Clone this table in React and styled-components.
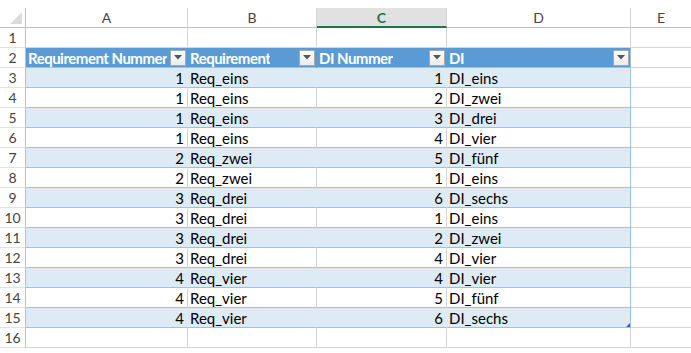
import React from 'react';
import styled, { createGlobalStyle } from 'styled-components';

const GlobalStyle = createGlobalStyle`
  html, body {
    margin: 0;
    padding: 0;
    background: #ffffff;
  }
  body {
    font-family: Lato, "Liberation Sans", sans-serif;
  }
`;

const columns = ['A', 'B', 'C', 'D', 'E'];

const headers = ['Requirement Nummer', 'Requirement', 'DI Nummer', 'DI'];

const data = [
  [1, 'Req_eins', 1, 'DI_eins'],
  [1, 'Req_eins', 2, 'DI_zwei'],
  [1, 'Req_eins', 3, 'DI_drei'],
  [1, 'Req_eins', 4, 'DI_vier'],
  [2, 'Req_zwei', 5, 'DI_fünf'],
  [2, 'Req_zwei', 1, 'DI_eins'],
  [3, 'Req_drei', 6, 'DI_sechs'],
  [3, 'Req_drei', 1, 'DI_eins'],
  [3, 'Req_drei', 2, 'DI_zwei'],
  [3, 'Req_drei', 4, 'DI_vier'],
  [4, 'Req_vier', 4, 'DI_vier'],
  [4, 'Req_vier', 5, 'DI_fünf'],
  [4, 'Req_vier', 6, 'DI_sechs'],
];

const GRID = '#d4d4d4';
const TABLE_LINE = '#9bc2e6';
const HEAD_BLUE = '#5b9bd5';
const BAND = '#ddebf7';

function FilterButton() {
  return (
    <FilterBox>
      <svg width="8" height="5" viewBox="0 0 8 5">
        <path d="M0 0 H8 L4 4.5 Z" fill="#555" />
      </svg>
    </FilterBox>
  );
}

export default function App() {
  const lastRow = data.length - 1;
  return (
    <>
      <GlobalStyle />
      <Sheet>
        <Corner>
          <svg width="12" height="12" viewBox="0 0 12 12">
            <path d="M12 0 V12 H0 Z" fill="#dcdcdc" />
          </svg>
        </Corner>
        {columns.map((c) => (
          <ColHead key={c} $selected={c === 'C'}>
            {c}
          </ColHead>
        ))}

        <RowHead>1</RowHead>
        {columns.map((c) => (
          <Cell key={c} />
        ))}

        <RowHead>2</RowHead>
        {headers.map((h, i) => (
          <HeadCell key={h} $last={i === 3}>
            <HeadLabel>{h}</HeadLabel>
            <FilterButton />
          </HeadCell>
        ))}
        <Cell />

        {data.map((row, r) => {
          const band = r % 2 === 0;
          return (
            <React.Fragment key={r}>
              <RowHead>{r + 3}</RowHead>
              {row.map((v, i) => (
                <DataCell
                  key={i}
                  $band={band}
                  $last={i === 3}
                  $right={typeof v === 'number'}
                >
                  {v}
                  {i === 3 && r === lastRow && <ResizeHandle />}
                </DataCell>
              ))}
              <Cell />
            </React.Fragment>
          );
        })}

        <RowHead>16</RowHead>
        {columns.map((c) => (
          <Cell key={c} />
        ))}
      </Sheet>
    </>
  );
}

const Sheet = styled.div`
  display: grid;
  grid-template-columns: 26px 162px 129px 130px 184px 61px;
  grid-auto-rows: 20px;
  padding-top: 8px;
  font-size: 15px;
  color: #000;
`;

const Corner = styled.div`
  box-sizing: border-box;
  border-right: 1px solid #bfbfbf;
  border-bottom: 1px solid #bfbfbf;
  display: flex;
  align-items: flex-end;
  justify-content: flex-end;
  padding: 0 3px 3px 0;
`;

const ColHead = styled.div`
  box-sizing: border-box;
  display: flex;
  align-items: center;
  justify-content: center;
  background: ${(p) => (p.$selected ? '#e1e1e1' : '#ffffff')};
  color: ${(p) => (p.$selected ? '#217346' : '#444444')};
  font-weight: ${(p) => (p.$selected ? 700 : 400)};
  font-size: 14px;
  border-right: 1px solid ${GRID};
  border-bottom: ${(p) => (p.$selected ? '2px solid #217346' : '1px solid #bfbfbf')};
`;

const RowHead = styled.div`
  box-sizing: border-box;
  display: flex;
  align-items: center;
  justify-content: center;
  color: #444444;
  font-size: 14px;
  border-right: 1px solid #bfbfbf;
  border-bottom: 1px solid #e1e1e1;
`;

const Cell = styled.div`
  box-sizing: border-box;
  border-right: 1px solid ${GRID};
  border-bottom: 1px solid ${GRID};
`;

const HeadCell = styled.div`
  box-sizing: border-box;
  display: flex;
  align-items: center;
  justify-content: space-between;
  gap: 2px;
  background: ${HEAD_BLUE};
  color: #ffffff;
  font-weight: 700;
  padding-left: 2px;
  padding-right: 1px;
  white-space: nowrap;
  overflow: hidden;
  border-right: 1px solid ${(p) => (p.$last ? TABLE_LINE : HEAD_BLUE)};
  border-bottom: 1px solid ${TABLE_LINE};
`;

const HeadLabel = styled.span`
  min-width: 0;
  overflow: hidden;
  letter-spacing: -0.5px;
`;

const FilterBox = styled.div`
  box-sizing: border-box;
  width: 16px;
  height: 16px;
  flex: none;
  display: flex;
  align-items: center;
  justify-content: center;
  background: linear-gradient(#fdfdfd, #ececec);
  border: 1px solid #a8a8a8;
`;

const DataCell = styled.div`
  position: relative;
  box-sizing: border-box;
  display: flex;
  align-items: center;
  justify-content: ${(p) => (p.$right ? 'flex-end' : 'flex-start')};
  padding: 0 3px 0 2px;
  background: ${(p) => (p.$band ? BAND : '#ffffff')};
  white-space: nowrap;
  border-right: 1px solid
    ${(p) => (p.$last ? TABLE_LINE : p.$band ? BAND : GRID)};
  border-bottom: 1px solid ${TABLE_LINE};
`;

const ResizeHandle = styled.span`
  position: absolute;
  right: 0;
  bottom: 0;
  width: 0;
  height: 0;
  border-left: 4px solid transparent;
  border-bottom: 4px solid #3a5fc0;
`;
